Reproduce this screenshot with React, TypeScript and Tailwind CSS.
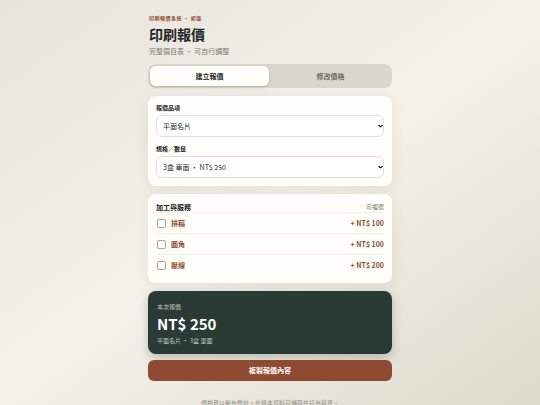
import { useState, type ReactNode } from "react";

const products = ["平面名片", "貼紙", "傳單"];

const specs = [
  { name: "3盒 單面", price: 250 },
  { name: "5盒 單面", price: 400 },
];

const services = [
  { name: "排稿", price: 100 },
  { name: "圓角", price: 100 },
  { name: "壓線", price: 200 },
];

const cardClass =
  "mt-2 rounded-lg bg-[#fffefa] px-2 py-2 shadow-[0_4px_14px_rgba(70,65,45,0.08)]";

type FieldProps = {
  id: string;
  label: string;
  value: string | number;
  onChange: (value: string) => void;
  children: ReactNode;
};

function SelectField({ id, label, value, onChange, children }: FieldProps) {
  return (
    <div>
      <label
        htmlFor={id}
        className="block pb-[3px] text-[6px] leading-2 font-bold"
      >
        {label}
      </label>
      <div className="relative">
        <select
          id={id}
          className="block h-[22px] w-full appearance-none rounded-md border border-[#dedfda] bg-white px-1.5 text-[7px] text-[#202724] outline-none"
          value={value}
          onChange={(e) => onChange(e.target.value)}
        >
          {children}
        </select>
        <svg
          viewBox="0 0 10 6"
          className="pointer-events-none absolute top-1/2 right-px h-[3px] w-[5px] -translate-y-1/2"
          fill="none"
          stroke="#1c1f1e"
          strokeWidth="2.4"
        >
          <path d="M1 1l4 4 4-4" />
        </svg>
      </div>
    </div>
  );
}

export default function App() {
  const [tab, setTab] = useState("quote");
  const [product, setProduct] = useState(products[0]);
  const [spec, setSpec] = useState(0);
  const [picked, setPicked] = useState<string[]>([]);

  const total =
    specs[spec].price +
    services
      .filter((s) => picked.includes(s.name))
      .reduce((sum, s) => sum + s.price, 0);

  const toggle = (name: string) =>
    setPicked((list) =>
      list.includes(name) ? list.filter((n) => n !== name) : [...list, name],
    );

  const tabClass = (id: string) =>
    tab === id
      ? "flex-1 rounded-md bg-[#fffefa] text-[#202724] shadow-[0_1px_3px_rgba(40,40,30,0.2)]"
      : "flex-1 rounded-md text-[#6b6f67]";

  return (
    <div className="min-h-screen bg-[linear-gradient(145deg,#e6e3dc_0%,#f4f1e9_50%,#dcd9cc_100%)] font-['Noto_Sans_CJK_TC','Noto_Sans',sans-serif] text-[#202724]">
      <main className="mx-auto max-w-61 pt-3.5">
        <header className="px-px">
          <p className="text-[5px] leading-2 font-bold tracking-widest text-[#914c31]">
            印刷報價系統 ・ 初版
          </p>
          <h1 className="text-[14px] leading-6 font-bold">印刷報價</h1>
          <p className="text-[7px] leading-2.5 text-[#777a72]">
            完整價目表 ・ 可自行調整
          </p>
        </header>

        <nav className="mt-2 flex h-6 gap-0.5 rounded-lg bg-[#d9d7cb] p-0.5 text-[7px] font-bold">
          <button className={tabClass("quote")} onClick={() => setTab("quote")}>
            建立報價
          </button>
          <button className={tabClass("price")} onClick={() => setTab("price")}>
            修改價格
          </button>
        </nav>

        <section className={`${cardClass} space-y-2`}>
          <SelectField
            id="product"
            label="報價品項"
            value={product}
            onChange={setProduct}
          >
            {products.map((name) => (
              <option key={name}>{name}</option>
            ))}
          </SelectField>
          <SelectField
            id="spec"
            label="規格／數量"
            value={spec}
            onChange={(v) => setSpec(Number(v))}
          >
            {specs.map((s, i) => (
              <option key={s.name} value={i}>
                {s.name} ・ NT$ {s.price}
              </option>
            ))}
          </SelectField>
        </section>

        <section className={cardClass}>
          <div className="flex items-center justify-between leading-2.5">
            <h2 className="text-[7px] font-bold">加工與服務</h2>
            <span className="text-[6px] text-[#777a72]">可複選</span>
          </div>
          <ul className="text-[7px] font-bold text-[#914c31]">
            {services.map((s) => (
              <li key={s.name} className="border-t border-[#f1efe9]">
                <label className="flex h-5 items-center">
                  <input
                    type="checkbox"
                    className="mr-[5px] ml-px size-[9px] appearance-none rounded-xs border border-[#a3a5a0] bg-white checked:border-[#914c31] checked:bg-[#914c31]"
                    checked={picked.includes(s.name)}
                    onChange={() => toggle(s.name)}
                  />
                  <span className="flex-1">{s.name}</span>
                  <span>+ NT$ {s.price}</span>
                </label>
              </li>
            ))}
          </ul>
        </section>

        <section className="mt-2 rounded-lg bg-[#2a3a34] px-[9px] pt-[11px] pb-2 text-white shadow-[0_4px_10px_rgba(40,50,40,0.25)]">
          <p className="text-[6px] leading-2.5 text-[#c3c8c4]">本次報價</p>
          <p className="text-[15px] leading-6 font-bold">NT$ {total}</p>
          <p className="text-[6px] leading-2.5 text-[#c3c8c4]">
            {product} ・ {specs[spec].name}
          </p>
        </section>

        <button className="mt-[5px] h-[21px] w-full rounded-md bg-[#8f4b31] text-[7px] font-bold text-white">
          複製報價內容
        </button>

        <footer className="mt-[18px] text-center text-[6px] leading-2 text-[#8a8b82]">
          價格皆以新台幣計。此版本資料只儲存在這台裝置。
        </footer>
      </main>
    </div>
  );
}
